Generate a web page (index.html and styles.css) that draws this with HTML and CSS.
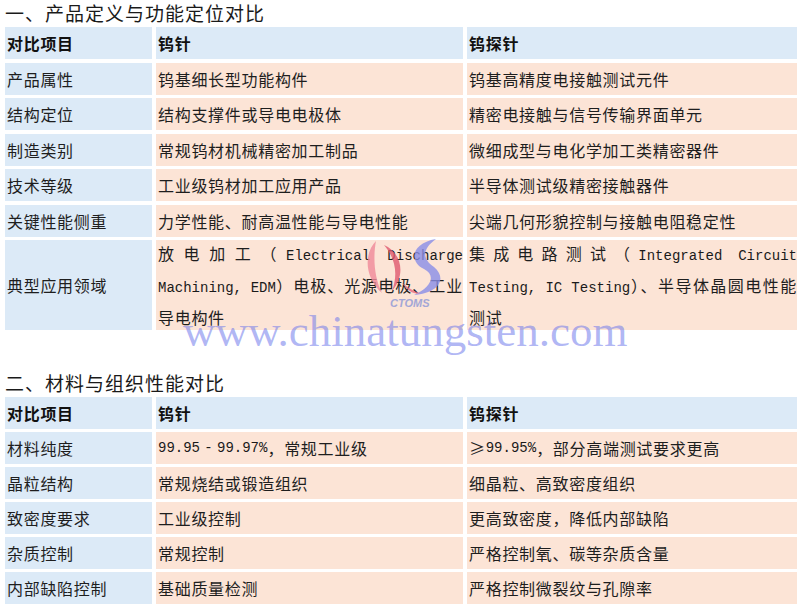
FILE: index.html
```html
<!DOCTYPE html>
<html lang="zh-CN">
<head>
<meta charset="utf-8">
<title>钨针与钨探针对比</title>
<link rel="stylesheet" href="styles.css">
</head>
<body>
<div class="page">
  <h2 class="title">一、产品定义与功能定位对比</h2>
  <div class="tbl tbl1">
    <div class="cell hd">对比项目</div><div class="cell hd">钨针</div><div class="cell hd">钨探针</div>
    <div class="cell key">产品属性</div><div class="cell val">钨基细长型功能构件</div><div class="cell val">钨基高精度电接触测试元件</div>
    <div class="cell key">结构定位</div><div class="cell val">结构支撑件或导电电极体</div><div class="cell val">精密电接触与信号传输界面单元</div>
    <div class="cell key">制造类别</div><div class="cell val">常规钨材机械精密加工制品</div><div class="cell val">微细成型与电化学加工类精密器件</div>
    <div class="cell key">技术等级</div><div class="cell val">工业级钨材加工应用产品</div><div class="cell val">半导体测试级精密接触器件</div>
    <div class="cell key">关键性能侧重</div><div class="cell val">力学性能、耐高温性能与导电性能</div><div class="cell val">尖端几何形貌控制与接触电阻稳定性</div>
    <div class="cell key">典型应用领域</div>
    <div class="cell val multi">
      <span class="jl">放电加工（<span class="lat">Electrical Discharge</span></span>
      <span class="jl"><span class="lat">Machining, EDM</span>）电极、光源电极、工业</span>
      <span class="ln">导电构件</span>
    </div>
    <div class="cell val multi">
      <span class="jl">集成电路测试（<span class="lat">Integrated Circuit</span></span>
      <span class="jl"><span class="lat">Testing, IC Testing</span>）、半导体晶圆电性能</span>
      <span class="ln">测试</span>
    </div>
  </div>

  <h2 class="title title2">二、材料与组织性能对比</h2>
  <div class="tbl tbl2">
    <div class="cell hd">对比项目</div><div class="cell hd">钨针</div><div class="cell hd">钨探针</div>
    <div class="cell key">材料纯度</div><div class="cell val"><span class="lat">99.95</span><span class="lat dash">-</span><span class="lat">99.97%</span>，常规工业级</div><div class="cell val">≥<span class="lat">99.95%</span>，部分高端测试要求更高</div>
    <div class="cell key">晶粒结构</div><div class="cell val">常规烧结或锻造组织</div><div class="cell val">细晶粒、高致密度组织</div>
    <div class="cell key">致密度要求</div><div class="cell val">工业级控制</div><div class="cell val">更高致密度，降低内部缺陷</div>
    <div class="cell key">杂质控制</div><div class="cell val">常规控制</div><div class="cell val">严格控制氧、碳等杂质含量</div>
    <div class="cell key">内部缺陷控制</div><div class="cell val">基础质量检测</div><div class="cell val">严格控制微裂纹与孔隙率</div>
  </div>

  <div class="wm-logo">
    <svg viewBox="0 0 86 72" width="86" height="72" aria-hidden="true">
      <path d="M14 4 C2 16 2 40 20 56 C12 40 11 20 14 4 Z" fill="#f08a9a"/>
      <path d="M22 8 C40 16 44 38 30 54 C36 38 34 22 22 8 Z" fill="#e05a70"/>
      <path d="M74 2 C50 6 46 24 62 32 C74 38 70 50 52 58 C76 56 86 42 72 30 C60 22 60 12 74 2 Z" fill="#8a8ee8"/>
      <path d="M40 46 C46 54 52 58 58 56 C50 54 46 50 40 46 Z" fill="#e86a80"/>
      <text x="28" y="70" class="wm-ctoms">CTOMS</text>
    </svg>
  </div>
  <div class="wm-text">www.chinatungsten.com</div>
</div>
</body>
</html>
```

FILE: styles.css
```css
html, body {
  margin: 0;
  padding: 0;
  background: #ffffff;
}

body {
  font-family: "Noto Sans CJK SC", "Noto Sans", sans-serif;
  color: #1e1e1e;
}

.page {
  position: relative;
  width: 800px;
  height: 610px;
  overflow: hidden;
}

.title {
  margin: 0;
  padding: 0 0 0 5px;
  height: 27px;
  line-height: 25px;
  font-size: 19px;
  letter-spacing: 1px;
  font-weight: normal;
  color: #1a1a1a;
}

.title2 {
  margin-top: 39.5px;
}

.tbl {
  display: grid;
  grid-template-columns: 147px 307px 330px;
  column-gap: 4px;
  margin-left: 5px;
}

.tbl1 {
  row-gap: 3.5px;
  grid-template-rows: repeat(6, 32px) 90px;
}

.tbl2 {
  row-gap: 3px;
  grid-template-rows: 32px repeat(5, 32px);
}

.cell {
  display: flex;
  align-items: center;
  padding: 0 0 0 2px;
  font-size: 16px;
  letter-spacing: 0.7px;
  white-space: nowrap;
  overflow: visible;
}

.hd {
  background: #dceaf7;
  font-weight: bold;
  color: #111;
}

.key {
  background: #dceaf7;
}

.val {
  background: #fce4d6;
}

.multi {
  flex-direction: column;
  align-items: stretch;
  justify-content: center;
  white-space: normal;
  line-height: 29px;
}

.jl {
  display: block;
  text-align: justify;
  text-align-last: justify;
}

.ln {
  display: block;
}

.lat {
  font-family: "Liberation Mono", monospace;
  font-size: 14px;
  letter-spacing: 0;
  color: #1a1a1a;
}

.dash {
  display: inline-block;
  width: 17px;
  text-align: center;
}

.wm-logo {
  position: absolute;
  left: 362px;
  top: 237px;
  width: 86px;
  height: 72px;
  opacity: 0.8;
}

.wm-logo svg {
  display: block;
}

.wm-ctoms {
  font-family: "Liberation Sans", sans-serif;
  font-size: 11px;
  font-weight: bold;
  font-style: italic;
  fill: #8d98d8;
}

.wm-text {
  position: absolute;
  left: 183px;
  top: 309px;
  font-family: "Liberation Serif", serif;
  font-size: 45px;
  line-height: 45px;
  color: rgba(110, 120, 235, 0.55);
  white-space: nowrap;
}
```
